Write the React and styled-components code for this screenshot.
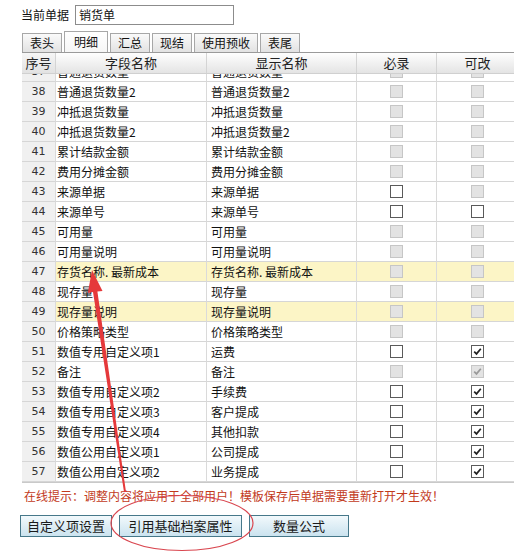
import styled, { createGlobalStyle } from "styled-components";

const GlobalStyle = createGlobalStyle`
  html, body {
    margin: 0;
    padding: 0;
    background: #ffffff;
    overflow: hidden;
  }
  body {
    font-family: "Noto Sans CJK SC", "Liberation Sans", sans-serif;
    font-size: 12px;
    color: #111;
  }
`;

const rows = [
  { no: 37, field: "普通退货数量", label: "普通退货数量", must: "off", edit: "off" },
  { no: 38, field: "普通退货数量2", label: "普通退货数量2", must: "off", edit: "off" },
  { no: 39, field: "冲抵退货数量", label: "冲抵退货数量", must: "off", edit: "off" },
  { no: 40, field: "冲抵退货数量2", label: "冲抵退货数量2", must: "off", edit: "off" },
  { no: 41, field: "累计结款金额", label: "累计结款金额", must: "off", edit: "off" },
  { no: 42, field: "费用分摊金额", label: "费用分摊金额", must: "off", edit: "off" },
  { no: 43, field: "来源单据", label: "来源单据", must: "empty", edit: "off" },
  { no: 44, field: "来源单号", label: "来源单号", must: "empty", edit: "empty" },
  { no: 45, field: "可用量", label: "可用量", must: "off", edit: "off" },
  { no: 46, field: "可用量说明", label: "可用量说明", must: "off", edit: "off" },
  { no: 47, field: "存货名称. 最新成本", label: "存货名称. 最新成本", must: "off", edit: "off", hl: true },
  { no: 48, field: "现存量", label: "现存量", must: "off", edit: "off" },
  { no: 49, field: "现存量说明", label: "现存量说明", must: "off", edit: "off", hl: true },
  { no: 50, field: "价格策略类型", label: "价格策略类型", must: "off", edit: "off" },
  { no: 51, field: "数值专用自定义项1", label: "运费", must: "empty", edit: "checked" },
  { no: 52, field: "备注", label: "备注", must: "off", edit: "checkedOff" },
  { no: 53, field: "数值专用自定义项2", label: "手续费", must: "empty", edit: "checked" },
  { no: 54, field: "数值专用自定义项3", label: "客户提成", must: "empty", edit: "checked" },
  { no: 55, field: "数值专用自定义项4", label: "其他扣款", must: "empty", edit: "checked" },
  { no: 56, field: "数值公用自定义项1", label: "公司提成", must: "empty", edit: "checked" },
  { no: 57, field: "数值公用自定义项2", label: "业务提成", must: "empty", edit: "checked" },
];

const tabs = ["表头", "明细", "汇总", "现结", "使用预收", "表尾"];

const COLS = "34px 151px 150px 80px 82px";

const Page = styled.div`
  position: relative;
  width: 514px;
  height: 553px;
  padding-top: 4px;
  box-sizing: border-box;
`;

const TopRow = styled.div`
  display: flex;
  align-items: center;
  gap: 6px;
  padding-left: 21px;
  height: 21px;
`;

const Label = styled.span`
  font-size: 12px;
  color: #111;
`;

const DocInput = styled.div`
  width: 159px;
  height: 20px;
  box-sizing: border-box;
  border: 1px solid #8c8c8c;
  padding: 0 3px;
  line-height: 18px;
  font-size: 12px;
  background: #fff;
`;

const TabStrip = styled.div`
  display: flex;
  align-items: flex-end;
  gap: 2px;
  margin-top: 6px;
  padding-left: 22px;
  height: 21px;
`;

const Tab = styled.div`
  height: ${(p) => (p.$active ? "21px" : "19px")};
  padding: 0 ${(p) => (p.$pad || 7)}px;
  box-sizing: border-box;
  border: 1px solid #a7a7a7;
  border-bottom: none;
  background: ${(p) =>
    p.$active
      ? "linear-gradient(#ffffff, #f6f6f6)"
      : "linear-gradient(#fafafa, #e2e2e2)"};
  font-size: 12px;
  line-height: ${(p) => (p.$active ? "20px" : "18px")};
  color: #111;
`;

const Grid = styled.div`
  margin-left: 22px;
  width: 497px;
  border-top: 1px solid #9a9a9a;
  border-bottom: 1px solid #c9c9c9;
`;

const HeadRow = styled.div`
  display: grid;
  grid-template-columns: ${COLS};
  height: 20px;
  background: linear-gradient(#fefefe, #e4e4e4);
  border-bottom: 1px solid #d0d0d0;
`;

const HeadCell = styled.div`
  text-align: center;
  font-size: 13px;
  line-height: 19px;
  color: #222;
  border-right: 1px solid #d4d4d4;
  &:first-child {
    background: linear-gradient(#f6f6f6, #e2e2e2);
  }
`;

const Viewport = styled.div`
  height: 408px;
  overflow: hidden;
`;

const Scroller = styled.div`
  margin-top: -12px;
`;

const Row = styled.div`
  display: grid;
  grid-template-columns: ${COLS};
  height: 20px;
  background: ${(p) => (p.$hl ? "#fcf5c6" : "#ffffff")};
`;

const Cell = styled.div`
  box-sizing: border-box;
  border-right: 1px solid #dadada;
  border-bottom: 1px solid #d6d6d6;
  line-height: 19px;
  white-space: nowrap;
  overflow: hidden;
  padding-left: ${(p) => p.$pad || 0}px;
`;

const SeqCell = styled(Cell)`
  background: #f0f0f0;
  text-align: center;
  font-family: "DejaVu Sans", "Liberation Sans", sans-serif;
  font-size: 11px;
  color: #333;
`;

const BoxCell = styled(Cell)`
  display: flex;
  align-items: center;
  justify-content: center;
`;

const Box = styled.span`
  width: 13px;
  height: 13px;
  box-sizing: border-box;
  display: inline-flex;
  align-items: center;
  justify-content: center;
  border: 1px solid
    ${(p) => (p.$state === "off" || p.$state === "checkedOff" ? "#c6c6c6" : "#5a5a5a")};
  background: ${(p) =>
    p.$state === "off" || p.$state === "checkedOff" ? "#e3e3e3" : "#ffffff"};
`;

const Tip = styled.div`
  margin: 5px 0 0 24px;
  color: #c23a1c;
  font-size: 12px;
  line-height: 16px;
`;

const ButtonRow = styled.div`
  display: flex;
  margin: 11px 0 0 20px;
`;

const Button = styled.div`
  width: ${(p) => p.$w}px;
  margin-right: ${(p) => p.$gap || 0}px;
  height: 22px;
  box-sizing: border-box;
  border: 1px solid #46788a;
  background: linear-gradient(#f2f9fc, #cbe3ef);
  text-align: center;
  line-height: 20px;
  font-size: 13px;
  color: #1a1a1a;
`;

const Overlay = styled.svg`
  position: absolute;
  left: 0;
  top: 0;
  pointer-events: none;
`;

function CheckBox({ state }) {
  const checked = state === "checked" || state === "checkedOff";
  return (
    <Box $state={state}>
      {checked && (
        <svg width="9" height="9" viewBox="0 0 9 9">
          <path
            d="M1.2 4.6 L3.5 6.9 L7.8 1.8"
            fill="none"
            stroke={state === "checked" ? "#222" : "#9a9a9a"}
            strokeWidth="1.7"
          />
        </svg>
      )}
    </Box>
  );
}

export default function App() {
  return (
    <>
      <GlobalStyle />
      <Page>
        <TopRow>
          <Label>当前单据</Label>
          <DocInput>销货单</DocInput>
        </TopRow>

        <TabStrip>
          {tabs.map((t) => (
            <Tab key={t} $active={t === "明细"} $pad={t === "明细" ? 9 : 7}>
              {t}
            </Tab>
          ))}
        </TabStrip>

        <Grid>
          <HeadRow>
            <HeadCell>序号</HeadCell>
            <HeadCell>字段名称</HeadCell>
            <HeadCell>显示名称</HeadCell>
            <HeadCell>必录</HeadCell>
            <HeadCell>可改</HeadCell>
          </HeadRow>
          <Viewport>
            <Scroller>
              {rows.map((r) => (
                <Row key={r.no} $hl={r.hl}>
                  <SeqCell>{r.no}</SeqCell>
                  <Cell $pad={1}>{r.field}</Cell>
                  <Cell $pad={4}>{r.label}</Cell>
                  <BoxCell>
                    <CheckBox state={r.must} />
                  </BoxCell>
                  <BoxCell>
                    <CheckBox state={r.edit} />
                  </BoxCell>
                </Row>
              ))}
            </Scroller>
          </Viewport>
        </Grid>

        <Tip>在线提示：调整内容将应用于全部用户！模板保存后单据需要重新打开才生效！</Tip>

        <ButtonRow>
          <Button $w={92} $gap={7}>自定义项设置</Button>
          <Button $w={123} $gap={7}>引用基础档案属性</Button>
          <Button $w={100}>数量公式</Button>
        </ButtonRow>

        <Overlay width="514" height="553" viewBox="0 0 514 553">
          <polygon
            points="92,270 102.5,291 97.4,291.5 126,491.9 124,492.1 93,292.1 87.8,293"
            fill="#e5393b"
          />
          <ellipse
            cx="182"
            cy="523"
            rx="71"
            ry="27.5"
            fill="none"
            stroke="#d9464f"
            strokeWidth="1.2"
          />
        </Overlay>
      </Page>
    </>
  );
}
